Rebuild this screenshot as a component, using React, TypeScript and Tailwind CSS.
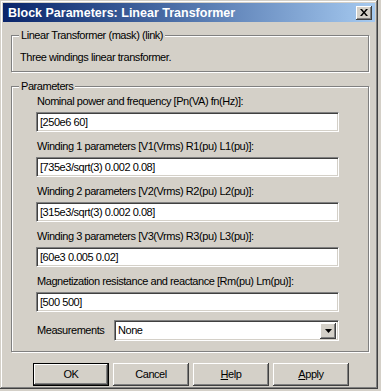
import { FC } from "react";

const face = "font-['Liberation_Sans',Arial,sans-serif]";

const sunken =
  "bg-white border border-t-[#808080] border-l-[#808080] border-b-white border-r-white shadow-[inset_1px_1px_0_#404040,inset_-1px_-1px_0_#d4d0c8]";

const raised =
  "bg-[#d4d0c8] shadow-[inset_-1px_-1px_0_#404040,inset_1px_1px_0_#ffffff,inset_-2px_-2px_0_#808080,inset_2px_2px_0_#d4d0c8]";

const fields = [
  { label: "Nominal power and frequency [Pn(VA) fn(Hz)]:", value: "[250e6 60]" },
  { label: "Winding 1 parameters [V1(Vrms) R1(pu) L1(pu)]:", value: "[735e3/sqrt(3) 0.002 0.08]" },
  { label: "Winding 2 parameters [V2(Vrms) R2(pu) L2(pu)]:", value: "[315e3/sqrt(3) 0.002 0.08]" },
  { label: "Winding 3 parameters [V3(Vrms) R3(pu) L3(pu)]:", value: "[60e3 0.005 0.02]" },
  { label: "Magnetization resistance and reactance [Rm(pu) Lm(pu)]:", value: "[500 500]" },
];

const GroupBox: FC<{ title: string; className: string; children: React.ReactNode }> = ({
  title,
  className,
  children,
}) => (
  <div
    className={`relative border border-[#808080] shadow-[inset_1px_1px_0_#ffffff,1px_1px_0_#ffffff] ${className}`}
  >
    <div className="absolute left-[7px] -top-[8px] px-[2px] bg-[#d4d0c8] leading-[14px]">{title}</div>
    {children}
  </div>
);

const Button: FC<{ children: React.ReactNode; isDefault?: boolean }> = ({ children, isDefault }) => (
  <div
    className={`w-[76px] h-[23px] flex items-center justify-center ${raised} ${
      isDefault ? "outline outline-1 outline-black -outline-offset-1 shadow-[inset_-2px_-2px_0_#404040,inset_2px_2px_0_#ffffff,inset_-3px_-3px_0_#808080]" : ""
    }`}
  >
    {children}
  </div>
);

const App: FC = () => {
  return (
    <div className={`w-[381px] h-[391px] bg-[#d4d0c8] text-[11px] tracking-[-0.45px] text-black ${face}`}>
      <div className="w-[378px] h-[389px] p-[3px] shadow-[inset_-1px_-1px_0_#404040,inset_1px_1px_0_#d4d0c8,inset_-2px_-2px_0_#808080,inset_2px_2px_0_#ffffff]">
        {/* title bar */}
        <div className="h-[19px] flex items-center justify-between pl-[5px] pr-[3px] bg-linear-to-r from-[#0a246a] to-[#a6caf0]">
          <div className="text-white font-bold text-[12.5px] tracking-[0px] pt-[1px]">Block Parameters: Linear Transformer</div>
          <div className={`w-[16px] h-[14px] flex items-center justify-center ${raised}`}>
            <svg width="8" height="7" viewBox="0 0 8 7">
              <path d="M0 0h2l2 2.5L6 0h2L5 3.5 8 7H6L4 4.5 2 7H0l3-3.5z" fill="#000" />
            </svg>
          </div>
        </div>

        <div className="ml-[8px] w-[358px]">
          <GroupBox title="Linear Transformer (mask) (link)" className="mt-[13px] h-[37px] pl-[8px] pt-[14px]">
            <div className="leading-[14px]">Three windings linear transformer.</div>
          </GroupBox>

          <GroupBox title="Parameters" className="mt-[14px] h-[266px] pl-[24px] pt-[7px]">
            <div className="flex flex-col">
              {fields.map((f, i) => (
                <div key={i} className="flex flex-col">
                  <div className="leading-[14px] pl-[1px]">{f.label}</div>
                  <div className={`mt-[4px] w-[303px] h-[20px] flex items-center pl-[3px] ${sunken}`}>
                    {f.value}
                  </div>
                  <div className="h-[7px]" />
                </div>
              ))}
              <div className="flex items-center mt-[1px]">
                <div className="w-[78px] pl-[1px]">Measurements</div>
                <div className={`w-[225px] h-[21px] flex items-center justify-between pl-[3px] pr-[2px] ${sunken}`}>
                  <span>None</span>
                  <div className={`w-[16px] h-[16px] flex items-center justify-center ${raised}`}>
                    <svg width="7" height="4" viewBox="0 0 7 4">
                      <path d="M0 0h7L3.5 4z" fill="#000" />
                    </svg>
                  </div>
                </div>
              </div>
            </div>
          </GroupBox>

          <div className="mt-[11px] ml-[22px] flex gap-[4px]">
            <Button isDefault>OK</Button>
            <Button>Cancel</Button>
            <Button>
              <span>
                <span className="underline">H</span>elp
              </span>
            </Button>
            <Button>
              <span>
                <span className="underline">A</span>pply
              </span>
            </Button>
          </div>
        </div>
      </div>
    </div>
  );
};

export default App;
